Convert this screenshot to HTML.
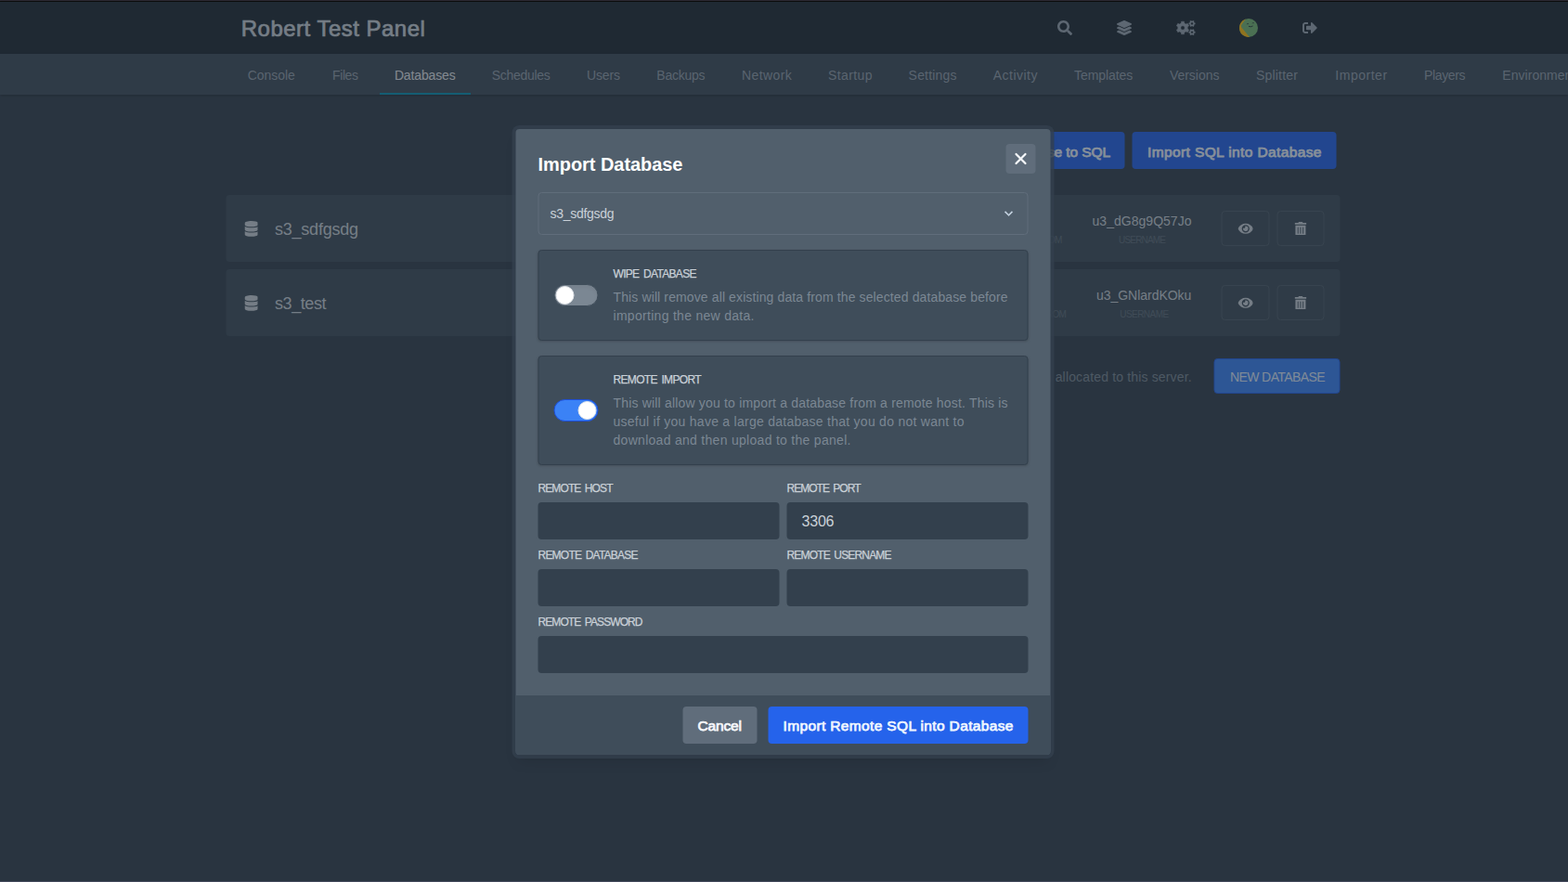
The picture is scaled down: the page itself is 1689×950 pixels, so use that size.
<!DOCTYPE html>
<html lang="en">
<head>
<meta charset="utf-8">
<title>Robert Test Panel</title>
<style>
*{box-sizing:border-box;margin:0;padding:0}
html,body{width:1689px;height:950px;overflow:hidden}
body{position:relative;background:#333f4d;font-family:"Liberation Sans",Arial,sans-serif;color:#cad1d8}
.abs{position:absolute}
.t{position:absolute;white-space:nowrap}
.topline{left:0;top:0;width:1689px;height:2px;background:linear-gradient(#2d2a34 0,#2d2a34 1px,#0e0e0e 1px,#0e0e0e 2px)}
.nav{left:0;top:2px;width:1689px;height:56px;background:#1f2933;box-shadow:0 1px 3px rgba(0,0,0,.1),0 1px 2px rgba(0,0,0,.06)}
.brand{font-size:24px;line-height:32px;color:#cad1d8;-webkit-text-stroke:.7px #cad1d8}
.subnav{left:0;top:58px;width:1689px;height:44px;background:#3f4d5a;box-shadow:0 1px 3px rgba(0,0,0,.18),0 1px 2px rgba(0,0,0,.1)}
.subnav .t{top:0;height:44px;line-height:47px;font-size:14px;color:#939eab}
.subnav .t.on{color:#e4e7eb}
.uline{top:42px;height:2px;background:#0891b2}
.row{left:243px;transform:translateX(.5px);width:1200px;height:72px;background:#3f4d5a;border-radius:4px}
.rowname{font-size:18px;line-height:28px;color:#cad1d8}
.uname{font-size:14px;line-height:20px;color:#cad1d8}
.ulabel{font-size:10px;line-height:12px;color:#606d7b}
.sbtn{width:51.5px;height:38px;border:1px solid #515f6c;border-radius:4px}
.bbtn{transform:translateX(.5px);height:40px;background:#2563eb;border-radius:4px;color:#eff6ff;font-size:15.5px;line-height:40px;overflow:hidden;-webkit-text-stroke:.75px #eff6ff}
.overlay{left:0;top:2px;width:1689px;height:948px;background:rgba(31,41,51,.5)}
.dialog{left:555px;transform:translateX(.5px);top:139px;width:576px;height:674px;background:#515f6c;border-radius:4px;box-shadow:0 0 0 4px rgba(51,64,77,.8),0 10px 15px -3px rgba(0,0,0,.1),0 4px 6px -4px rgba(0,0,0,.1)}
.dtitle{font-size:20px;line-height:28px;color:#fff;font-weight:bold}
.close{left:528px;top:16px;width:32px;height:32px;background:#606d7b;border-radius:4px}
.select{left:24px;top:68px;width:528px;height:46px;border:1px solid #606d7b;border-radius:4px;background:#515f6c}
.select .t{left:12px;top:12px;font-size:14px;line-height:20px;color:#cad1d8}
.box{left:24px;width:528px;background:#3f4d5a;border:1px solid #33404d;border-radius:4px;box-shadow:0 1px 3px rgba(0,0,0,.1),0 1px 2px rgba(0,0,0,.06)}
.toggle{left:16px;width:48px;height:24px;border-radius:12px;border:1px solid #3f4d5a;background:#7b8793;box-shadow:inset 0 2px 4px rgba(0,0,0,.06)}
.toggle.on{background:#3b82f6;border-color:#1d4ed8;box-shadow:none}
.knob{top:1px;width:20px;height:20px;border-radius:50%;background:#fff;border:1px solid #e4e7eb}
.blabel{font-size:12px;line-height:16px;color:#cad1d8;-webkit-text-stroke:.25px #cad1d8;word-spacing:2px}
.bdesc{font-size:14px;line-height:20px;color:#7b8793}
.flabel{font-size:12px;line-height:16px;color:#cad1d8;-webkit-text-stroke:.25px #cad1d8;word-spacing:2px}
.input{height:40px;background:#33404d;border-radius:4px}
.input .t{left:16px;top:8px;font-size:16px;line-height:24px;color:#cad1d8}
.footer{left:0;top:610px;width:576px;height:64px;background:#3f4d5a;border-radius:0 0 4px 4px}
.fbtn{top:12px;height:40px;border-radius:4px}
.fbtn .t{top:0;font-size:15.5px;line-height:40px;-webkit-text-stroke:.75px currentColor}
</style>
</head>
<body>
<div class="abs topline"></div>
<div class="abs nav">
  <div class="t brand" style="left:259.8px;top:12.5px;letter-spacing:0.479px">Robert Test Panel</div>
  <svg class="abs" style="left:1139px;top:20px" width="16.000" height="16" viewBox="0 0 512 512"><path fill="#9aa5b1" d="M505 442.7L405.3 343c-4.5-4.5-10.6-7-17-7H372c27.6-35.3 44-79.7 44-128C416 93.1 322.9 0 208 0S0 93.1 0 208s93.1 208 208 208c48.3 0 92.7-16.4 128-44v16.300c0 6.400 2.500 12.500 7 17l99.700 99.700c9.400 9.400 24.600 9.400 33.900 0l28.300-28.300c9.400-9.400 9.400-24.600.1-34zM208 336c-70.700 0-128-57.200-128-128 0-70.700 57.200-128 128-128 70.700 0 128 57.200 128 128 0 70.700-57.200 128-128 128z"/></svg>
  <svg class="abs" style="left:1203px;top:20px" width="16.000" height="16" viewBox="0 0 512 512"><path fill="#9aa5b1" d="M12.410 148.020l232.940 105.670c6.800 3.090 14.490 3.090 21.290 0l232.940-105.670c16.550-7.510 16.550-32.520 0-40.030L266.650 2.310a25.607 25.607 0 0 0-21.290 0L12.410 107.980c-16.550 7.510-16.550 32.530 0 40.040zm487.180 88.280l-58.090-26.330-161.640 73.270c-7.560 3.430-15.590 5.170-23.860 5.170s-16.290-1.740-23.860-5.170L70.510 209.970l-58.100 26.330c-16.550 7.500-16.550 32.500 0 40l232.940 105.590c6.800 3.080 14.490 3.080 21.290 0L499.590 276.300c16.550-7.500 16.550-32.500 0-40zm0 127.800l-57.870-26.230-161.860 73.370c-7.560 3.430-15.590 5.170-23.860 5.170s-16.290-1.740-23.860-5.170L70.290 337.870 12.410 364.100c-16.550 7.500-16.550 32.500 0 40l232.940 105.590c6.800 3.080 14.490 3.080 21.290 0L499.590 404.100c16.550-7.500 16.550-32.500 0-40z"/></svg>
  <svg class="abs" style="left:1267px;top:20px;overflow:visible" width="20" height="16" viewBox="0 0 20 16"><path fill="#9aa5b1" fill-rule="evenodd" stroke="#9aa5b1" stroke-width=".5" stroke-linejoin="round" d="M8.64 13.04 L8.46 14.85 L5.54 14.85 L5.36 13.04 L3.45 11.94 L1.80 12.68 L0.34 10.16 L1.82 9.10 L1.82 6.90 L0.34 5.84 L1.80 3.32 L3.45 4.06 L5.36 2.96 L5.54 1.15 L8.46 1.15 L8.64 2.96 L10.55 4.06 L12.20 3.32 L13.66 5.84 L12.18 6.90 L12.18 9.10 L13.66 10.16 L12.20 12.68 L10.55 11.94Z M4.80 8.00a2.20 2.20 0 1 0 4.40 0a2.20 2.20 0 1 0 -4.40 0Z"/><path fill="#9aa5b1" fill-rule="evenodd" stroke="#9aa5b1" stroke-width=".3" stroke-linejoin="round" d="M19.52 2.58 L20.33 2.69 L20.33 4.11 L19.52 4.22 L18.97 5.17 L19.28 5.93 L18.05 6.63 L17.55 5.99 L16.45 5.99 L15.95 6.63 L14.72 5.93 L15.03 5.17 L14.48 4.22 L13.67 4.11 L13.67 2.69 L14.48 2.58 L15.03 1.63 L14.72 0.87 L15.95 0.17 L16.45 0.81 L17.55 0.81 L18.05 0.17 L19.28 0.87 L18.97 1.63Z M15.70 3.40a1.30 1.30 0 1 0 2.60 0a1.30 1.30 0 1 0 -2.60 0Z M19.52 11.88 L20.33 11.99 L20.33 13.41 L19.52 13.52 L18.97 14.47 L19.28 15.23 L18.05 15.93 L17.55 15.29 L16.45 15.29 L15.95 15.93 L14.72 15.23 L15.03 14.47 L14.48 13.52 L13.67 13.41 L13.67 11.99 L14.48 11.88 L15.03 10.93 L14.72 10.17 L15.95 9.47 L16.45 10.11 L17.55 10.11 L18.05 9.47 L19.28 10.17 L18.97 10.93Z M15.70 12.70a1.30 1.30 0 1 0 2.60 0a1.30 1.30 0 1 0 -2.60 0Z"/></svg>
  <svg class="abs" style="left:1335px;top:18px" width="20" height="20" viewBox="0 0 20 20"><circle cx="10" cy="10" r="10" fill="#77b772"/><path fill="#ffbd0a" d="M6.727 .551A10 10 0 0 0 10.94 19.96L2.7 9.9Q1.3 8.1 2.6 6.3Z"/><path d="M8.2 5.750Q8.9 5.2 9.7 5.550M14.1 4.8Q14.8 4.3 15.5 4.650" stroke="#1f2933" stroke-opacity=".75" stroke-width=".9" stroke-linecap="round" fill="none"/><path d="M10.3 8.5Q12.1 9.4 14.2 8.2" stroke="#1f2933" stroke-opacity=".85" stroke-width="1" stroke-linecap="round" fill="none"/></svg>
  <svg class="abs" style="left:1403px;top:20px" width="16.000" height="16" viewBox="0 0 512 512"><path fill="#9aa5b1" d="M497 273L329 441c-15 15-41 4.500-41-17v-96H152c-13.300 0-24-10.700-24-24v-96c0-13.300 10.700-24 24-24h136V88c0-21.400 25.900-32 41-17l168 168c9.300 9.400 9.300 24.600 0 34zM192 436v-40c0-6.600-5.400-12-12-12H96c-17.700 0-32-14.300-32-32V160c0-17.700 14.300-32 32-32h84c6.600 0 12-5.400 12-12V76c0-6.600-5.400-12-12-12H96c-53 0-96 43-96 96v192c0 53 43 96 96 96h84c6.600 0 12-5.400 12-12z"/></svg>
</div>
<div class="abs subnav">
  <div class="t" style="left:266.8px;top:0px;letter-spacing:-0.046px">Console</div>
  <div class="t" style="left:358.0px;top:0px;letter-spacing:-0.391px">Files</div>
  <div class="t on" style="left:424.9px;top:0px;letter-spacing:-0.142px">Databases</div>
  <div class="t" style="left:529.7px;top:0px;letter-spacing:-0.299px">Schedules</div>
  <div class="t" style="left:632.0px;top:0px;letter-spacing:-0.141px">Users</div>
  <div class="t" style="left:707.3px;top:0px;letter-spacing:-0.251px">Backups</div>
  <div class="t" style="left:799.1px;top:0px;letter-spacing:0.373px">Network</div>
  <div class="t" style="left:892.0px;top:0px;letter-spacing:0.410px">Startup</div>
  <div class="t" style="left:978.6px;top:0px;letter-spacing:0.201px">Settings</div>
  <div class="t" style="left:1069.8px;top:0px;letter-spacing:0.465px">Activity</div>
  <div class="t" style="left:1157.1px;top:0px;letter-spacing:-0.077px">Templates</div>
  <div class="t" style="left:1259.9px;top:0px;letter-spacing:-0.015px">Versions</div>
  <div class="t" style="left:1352.9px;top:0px;letter-spacing:0.203px">Splitter</div>
  <div class="t" style="left:1438.3px;top:0px;letter-spacing:0.525px">Importer</div>
  <div class="t" style="left:1534.1px;top:0px;letter-spacing:-0.365px">Players</div>
  <div class="t" style="left:1618.3px;top:0px;letter-spacing:0.041px">Environment</div>
  <div class="abs uline" style="left:409px;width:97.5px"></div>
</div>

<div class="abs bbtn" style="left:1000px;top:142px;width:211px">
  <div class="t" style="right:15.5px;top:1.7px;letter-spacing:-.1px">Export Database to SQL</div>
</div>
<div class="abs bbtn" style="left:1219px;top:142px;width:220px">
  <div class="t" style="left:16.5px;top:1.7px;letter-spacing:0.385px">Import SQL into Database</div>
</div>

<div class="abs row" style="top:210px">
  <svg class="abs" style="left:19.55px;top:28.4px" width="14.700" height="16.8" viewBox="0 0 448 512"><path fill="#cad1d8" d="M448 73.143v45.714C448 159.143 347.667 192 224 192S0 159.143 0 118.857V73.143C0 32.857 100.333 0 224 0s224 32.857 224 73.143zM448 176v102.857C448 319.143 347.667 352 224 352S0 319.143 0 278.857V176c48.125 33.143 136.208 48.572 224 48.572S399.874 209.143 448 176zm0 160v102.857C448 479.143 347.667 512 224 512S0 479.143 0 438.857V336c48.125 33.143 136.208 48.572 224 48.572S399.874 369.143 448 336z"/></svg>
  <svg class="abs" style="left:1089.5px;top:28.65px" width="16.537" height="14.7" viewBox="0 0 576 512"><path fill="#cad1d8" d="M572.520 241.400C518.290 135.590 410.930 64 288 64S57.680 135.640 3.480 241.410a32.350 32.350 0 0 0 0 29.190C57.710 376.410 165.070 448 288 448s230.320-71.640 284.520-177.410a32.350 32.350 0 0 0 0-29.190zM288 400a144 144 0 1 1 144-144 143.930 143.930 0 0 1-144 144zm0-240a95.310 95.310 0 0 0-25.310 3.790 47.850 47.850 0 0 1-66.900 66.900A95.780 95.780 0 1 0 288 160z"/></svg>
  <svg class="abs" style="left:1151.2px;top:28.65px" width="12.862" height="14.7" viewBox="0 0 448 512"><path fill="#cad1d8" d="M32 464a48 48 0 0 0 48 48h288a48 48 0 0 0 48-48V128H32zm272-256a16 16 0 0 1 32 0v224a16 16 0 0 1-32 0zm-96 0a16 16 0 0 1 32 0v224a16 16 0 0 1-32 0zm-96 0a16 16 0 0 1 32 0v224a16 16 0 0 1-32 0zM432 32H312l-9.400-18.700A24 24 0 0 0 281.100 0H166.800a23.720 23.720 0 0 0-21.400 13.300L136 32H16A16 16 0 0 0 0 48v32a16 16 0 0 0 16 16h416a16 16 0 0 0 16-16V48a16 16 0 0 0-16-16z"/></svg>
  <div class="t rowname" style="left:52.5px;top:22.8px;letter-spacing:-0.231px">s3_sdfgsdg</div>
  <div class="t ulabel" style="right:300px;top:43px;letter-spacing:-.85px">CONNECTIONS FROM</div>
  <div class="t uname" style="left:933px;top:17.5px;letter-spacing:0.030px">u3_dG8g9Q57Jo</div>
  <div class="t ulabel" style="left:961.5px;top:43px;letter-spacing:-0.812px">USERNAME</div>
  <div class="abs sbtn" style="left:1072px;top:17px"></div>
  <div class="abs sbtn" style="left:1131.5px;top:17px"></div>
</div>
<div class="abs row" style="top:290px">
  <svg class="abs" style="left:19.55px;top:28.4px" width="14.700" height="16.8" viewBox="0 0 448 512"><path fill="#cad1d8" d="M448 73.143v45.714C448 159.143 347.667 192 224 192S0 159.143 0 118.857V73.143C0 32.857 100.333 0 224 0s224 32.857 224 73.143zM448 176v102.857C448 319.143 347.667 352 224 352S0 319.143 0 278.857V176c48.125 33.143 136.208 48.572 224 48.572S399.874 209.143 448 176zm0 160v102.857C448 479.143 347.667 512 224 512S0 479.143 0 438.857V336c48.125 33.143 136.208 48.572 224 48.572S399.874 369.143 448 336z"/></svg>
  <svg class="abs" style="left:1089.5px;top:28.65px" width="16.537" height="14.7" viewBox="0 0 576 512"><path fill="#cad1d8" d="M572.520 241.400C518.290 135.590 410.930 64 288 64S57.680 135.640 3.480 241.410a32.350 32.350 0 0 0 0 29.190C57.710 376.410 165.070 448 288 448s230.320-71.640 284.520-177.410a32.350 32.350 0 0 0 0-29.190zM288 400a144 144 0 1 1 144-144 143.930 143.930 0 0 1-144 144zm0-240a95.310 95.310 0 0 0-25.310 3.790 47.850 47.850 0 0 1-66.900 66.900A95.780 95.780 0 1 0 288 160z"/></svg>
  <svg class="abs" style="left:1151.2px;top:28.65px" width="12.862" height="14.7" viewBox="0 0 448 512"><path fill="#cad1d8" d="M32 464a48 48 0 0 0 48 48h288a48 48 0 0 0 48-48V128H32zm272-256a16 16 0 0 1 32 0v224a16 16 0 0 1-32 0zm-96 0a16 16 0 0 1 32 0v224a16 16 0 0 1-32 0zm-96 0a16 16 0 0 1 32 0v224a16 16 0 0 1-32 0zM432 32H312l-9.400-18.700A24 24 0 0 0 281.100 0H166.800a23.720 23.720 0 0 0-21.400 13.300L136 32H16A16 16 0 0 0 0 48v32a16 16 0 0 0 16 16h416a16 16 0 0 0 16-16V48a16 16 0 0 0-16-16z"/></svg>
  <div class="t rowname" style="left:52.5px;top:22.8px;letter-spacing:-0.424px">s3_test</div>
  <div class="t ulabel" style="right:295.5px;top:43px;letter-spacing:-.85px">CONNECTIONS FROM</div>
  <div class="t uname" style="left:937.5px;top:17.5px;letter-spacing:-0.035px">u3_GNlardKOku</div>
  <div class="t ulabel" style="left:962.7px;top:43px;letter-spacing:-0.527px">USERNAME</div>
  <div class="abs sbtn" style="left:1072px;top:17px"></div>
  <div class="abs sbtn" style="left:1131.5px;top:17px"></div>
</div>
<div class="t" style="right:405.2px;top:396px;letter-spacing:.158px;font-size:14px;line-height:20px;color:#7b8793">2 of 5 databases have been allocated to this server.</div>
<div class="abs" style="transform:translateX(.5px);left:1307px;top:386px;width:136px;height:38px;background:#3b82f6;border:1px solid #2563eb;border-radius:4px">
  <div class="t" style="left:16.5px;top:8.5px;letter-spacing:-0.607px;font-size:14px;line-height:20px;color:#dfeafc">NEW DATABASE</div>
</div>

<div class="abs overlay"></div>

<div class="abs dialog">
  <div class="t dtitle" style="left:24px;top:23.5px;letter-spacing:-0.051px">Import Database</div>
  <div class="abs close"><svg class="abs" style="left:6px;top:6px" width="20" height="20" viewBox="0 0 24 24" fill="none" stroke="#f5f7fa" stroke-width="2.7" stroke-linecap="round" stroke-linejoin="round"><path d="M6 18L18 6M6 6l12 12"/></svg></div>
  <div class="abs select"><div class="t" style="left:12px;top:12px;letter-spacing:-0.290px">s3_sdfgsdg</div>
    <svg class="abs" style="left:498px;top:14px" width="16" height="16" viewBox="0 0 20 20"><path fill="#c3d1df" d="M9.293 12.950l.707.707L15.657 8l-1.414-1.414L10 10.828 5.757 6.586 4.343 8z"/></svg>
  </div>
  <div class="abs box" style="top:130px;height:98px">
    <div class="abs toggle" style="top:36px"><div class="abs knob" style="left:1px"></div></div>
    <div class="t blabel" style="left:80px;top:17px;letter-spacing:-0.688px">WIPE DATABASE</div>
    <div class="t bdesc" style="left:80px;top:40px;letter-spacing:0.118px">This will remove all existing data from the selected database before</div>
    <div class="t bdesc" style="left:80px;top:60px;letter-spacing:0.294px">importing the new data.</div>
  </div>
  <div class="abs box" style="top:244px;height:118px">
    <div class="abs toggle on" style="top:46px"><div class="abs knob" style="left:25px"></div></div>
    <div class="t blabel" style="left:80px;top:17px;letter-spacing:-0.677px">REMOTE IMPORT</div>
    <div class="t bdesc" style="left:80px;top:40px;letter-spacing:0.180px">This will allow you to import a database from a remote host. This is</div>
    <div class="t bdesc" style="left:80px;top:60px;letter-spacing:0.264px">useful if you have a large database that you do not want to</div>
    <div class="t bdesc" style="left:80px;top:80px;letter-spacing:0.291px">download and then upload to the panel.</div>
  </div>
  <div class="t flabel" style="left:24px;top:379px;letter-spacing:-0.902px">REMOTE HOST</div>
  <div class="t flabel" style="left:292px;top:379px;letter-spacing:-0.980px">REMOTE PORT</div>
  <div class="abs input" style="left:24px;top:402px;width:260px"></div>
  <div class="abs input" style="left:292px;top:402px;width:260px"><div class="t" style="left:16px;top:8.5px;letter-spacing:-0.198px">3306</div></div>
  <div class="t flabel" style="left:24px;top:451px;letter-spacing:-0.779px">REMOTE DATABASE</div>
  <div class="t flabel" style="left:292px;top:451px;letter-spacing:-0.835px">REMOTE USERNAME</div>
  <div class="abs input" style="left:24px;top:474px;width:260px"></div>
  <div class="abs input" style="left:292px;top:474px;width:260px"></div>
  <div class="t flabel" style="left:24px;top:523px;letter-spacing:-0.914px">REMOTE PASSWORD</div>
  <div class="abs input" style="left:24px;top:546px;width:528px"></div>
  <div class="abs footer">
    <div class="abs fbtn" style="left:180px;width:80px;background:#606d7b;color:#f5f7fa"><div class="t" style="left:16px;top:0.5px;letter-spacing:-0.150px">Cancel</div></div>
    <div class="abs fbtn" style="left:272px;width:280px;background:#2563eb;color:#eff6ff"><div class="t" style="left:16px;top:0.5px;letter-spacing:0.359px">Import Remote SQL into Database</div></div>
  </div>
</div>
<div class="abs" style="left:0;top:949px;width:1689px;height:1px;background:#42485b"></div>
</body>
</html>
